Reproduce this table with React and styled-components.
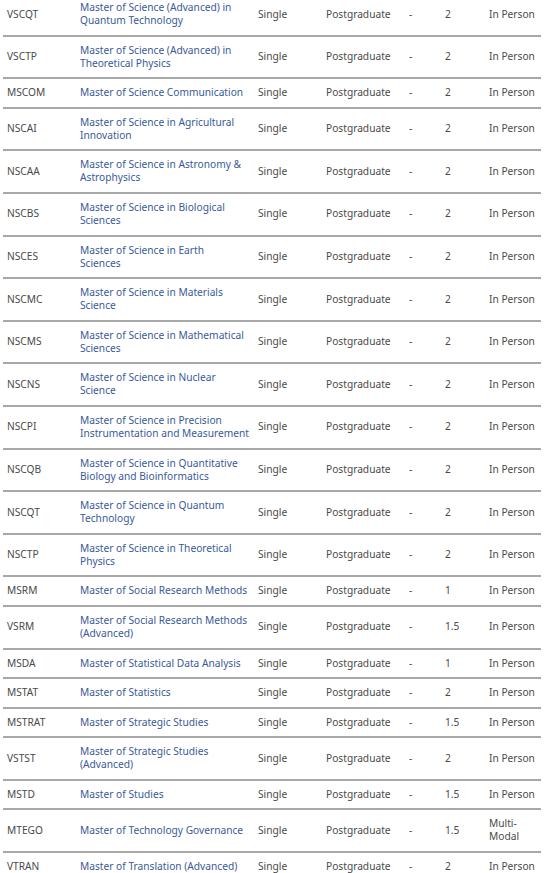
import styled, { createGlobalStyle } from "styled-components";

const GlobalStyle = createGlobalStyle`
  html, body {
    margin: 0;
    padding: 0;
    background: #ffffff;
  }
  body {
    font-family: "Noto Sans", "Liberation Sans", sans-serif;
    overflow: hidden;
  }
`;

const Page = styled.div`
  padding: 0 9px 0 3px;
  margin-top: -6px;
`;

const Table = styled.table`
  width: 538px;
  border-collapse: collapse;
  table-layout: fixed;
  font-size: 10.2px;
  line-height: 13px;
  color: #4a4a4a;
`;

const Col = styled.col`
  width: ${(p) => p.$w}px;
`;

const Row = styled.tr`
  border-bottom: 2px solid #a8a8a8;
`;

const Cell = styled.td`
  padding: 7px 4px 7.6px 4px;
  vertical-align: middle;
  text-align: left;
`;

const Title = styled.a`
  display: block;
  color: #3a5a98;
  text-decoration: none;
  white-space: nowrap;
  cursor: pointer;
`;

const Line = styled.span`
  display: block;
`;

// titles are split where the reference wraps them
const courses = [
  ["VSCQT", "Master of Science (Advanced) in|Quantum Technology", "2"],
  ["VSCTP", "Master of Science (Advanced) in|Theoretical Physics", "2"],
  ["MSCOM", "Master of Science Communication", "2"],
  ["NSCAI", "Master of Science in Agricultural|Innovation", "2"],
  ["NSCAA", "Master of Science in Astronomy &|Astrophysics", "2"],
  ["NSCBS", "Master of Science in Biological|Sciences", "2"],
  ["NSCES", "Master of Science in Earth|Sciences", "2"],
  ["NSCMC", "Master of Science in Materials|Science", "2"],
  ["NSCMS", "Master of Science in Mathematical|Sciences", "2"],
  ["NSCNS", "Master of Science in Nuclear|Science", "2"],
  ["NSCPI", "Master of Science in Precision|Instrumentation and Measurement", "2"],
  ["NSCQB", "Master of Science in Quantitative|Biology and Bioinformatics", "2"],
  ["NSCQT", "Master of Science in Quantum|Technology", "2"],
  ["NSCTP", "Master of Science in Theoretical|Physics", "2"],
  ["MSRM", "Master of Social Research Methods", "1"],
  ["VSRM", "Master of Social Research Methods|(Advanced)", "1.5"],
  ["MSDA", "Master of Statistical Data Analysis", "1"],
  ["MSTAT", "Master of Statistics", "2"],
  ["MSTRAT", "Master of Strategic Studies", "1.5"],
  ["VSTST", "Master of Strategic Studies|(Advanced)", "2"],
  ["MSTD", "Master of Studies", "1.5"],
  ["MTEGO", "Master of Technology Governance", "1.5", "Multi-Modal"],
  ["VTRAN", "Master of Translation (Advanced)", "2"],
];

const App = () => {
  return (
    <Page>
      <GlobalStyle />
      <Table>
        <colgroup>
          <Col $w={73} />
          <Col $w={178} />
          <Col $w={68} />
          <Col $w={83} />
          <Col $w={36} />
          <Col $w={44} />
          <Col $w={56} />
        </colgroup>
        <tbody>
          {courses.map(([code, title, years, mode]) => (
            <Row key={code}>
              <Cell>{code}</Cell>
              <Cell>
                <Title>
                  {title.split("|").map((part) => (
                    <Line key={part}>{part}</Line>
                  ))}
                </Title>
              </Cell>
              <Cell>Single</Cell>
              <Cell>Postgraduate</Cell>
              <Cell>-</Cell>
              <Cell>{years}</Cell>
              <Cell>{mode || "In Person"}</Cell>
            </Row>
          ))}
        </tbody>
      </Table>
    </Page>
  );
};

export default App;
